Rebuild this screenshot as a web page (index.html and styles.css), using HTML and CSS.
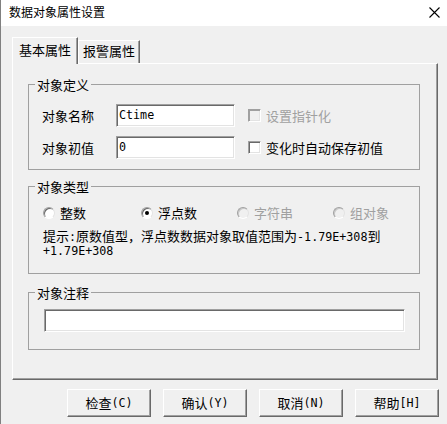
FILE: index.html
```html
<!DOCTYPE html>
<html>
<head>
<meta charset="utf-8">
<link rel="stylesheet" href="styles.css">
</head>
<body>
<div class="window">
  <div class="titlebar">
    <span class="title">数据对象属性设置</span>
    <svg class="close" width="11" height="11" viewBox="0 0 11 11"><path d="M0.5 0.5 L10.5 10.5 M10.5 0.5 L0.5 10.5" stroke="#000" stroke-width="1.1" fill="none"/></svg>
  </div>
  <div class="content">
    <div class="tabs">
      <div class="tab active">基本属性</div>
      <div class="tab other">报警属性</div>
    </div>
    <div class="panel">
      <fieldset class="group">
        <legend>对象定义</legend>
        <div class="inner g1">
          <div class="row">
            <span class="lbl">对象名称</span>
            <div class="input small"><span class="m">Ctime</span></div>
            <span class="check disabled"><span class="box"></span>设置指针化</span>
          </div>
          <div class="row">
            <span class="lbl">对象初值</span>
            <div class="input small"><span class="m">0</span></div>
            <span class="check"><span class="box"></span>变化时自动保存初值</span>
          </div>
        </div>
      </fieldset>
      <fieldset class="group">
        <legend>对象类型</legend>
        <div class="inner g2">
          <div class="radios">
            <span class="radio"><span class="rd"></span>整数</span>
            <span class="radio"><span class="rd"><span class="dot"></span></span>浮点数</span>
            <span class="radio disabled"><span class="rd"></span>字符串</span>
            <span class="radio disabled"><span class="rd"></span>组对象</span>
          </div>
          <div class="hint">提示<span class="m">:</span>原数值型，浮点数数据对象取值范围为<span class="m">-1.79E+308</span>到<br><span class="m">+1.79E+308</span></div>
        </div>
      </fieldset>
      <fieldset class="group">
        <legend>对象注释</legend>
        <div class="inner g3">
          <div class="input wide"></div>
        </div>
      </fieldset>
    </div>
    <div class="buttons">
      <div class="btn">检查<span class="m">(C)</span></div>
      <div class="btn">确认<span class="m">(Y)</span></div>
      <div class="btn">取消<span class="m">(N)</span></div>
      <div class="btn">帮助<span class="m">[H]</span></div>
    </div>
  </div>
</div>
</body>
</html>
```
FILE: styles.css
```css
body {
  margin: 0;
  background: #f0f0f0;
  font-family: "Noto Sans CJK SC", sans-serif;
  font-size: 13px;
  color: #000;
}
.m {
  font-family: "DejaVu Sans Mono", monospace;
  font-size: 11.7px;
}
.window {
  width: 447px;
  height: 424px;
  box-sizing: border-box;
  border-left: 1px solid #808080;
  display: flex;
  flex-direction: column;
}
.titlebar {
  height: 26px;
  flex: none;
  background: #fff;
  display: flex;
  align-items: center;
  justify-content: space-between;
  padding: 0 7px 2px 8px;
  box-sizing: border-box;
}
.title {
  font-size: 12px;
  line-height: 16px;
}
.close { display: block; }
.content {
  padding: 11px 0 0 11px;
}
.tabs {
  display: flex;
  align-items: flex-end;
  height: 27px;
  margin-bottom: -1px;
  position: relative;
  z-index: 1;
}
.tab {
  box-sizing: border-box;
  background: #f0f0f0;
  border-top: 1px solid #fff;
  border-left: 1px solid #fff;
  border-right: 1px solid #696969;
  box-shadow: inset -1px 0 0 #a0a0a0;
  text-align: center;
  line-height: 18px;
}
.tab.active {
  width: 66px;
  height: 27px;
  padding-top: 3px;
}
.tab.other {
  width: 62px;
  height: 23px;
  margin-bottom: 1px;
  padding-top: 1px;
}
.panel {
  width: 426px;
  height: 317px;
  box-sizing: border-box;
  border-top: 1px solid #fff;
  border-left: 1px solid #fff;
  border-right: 1px solid #696969;
  border-bottom: 1px solid #696969;
  box-shadow: inset -1px -1px 0 #a0a0a0;
  padding-top: 13px;
}
.group {
  margin: 0 17px 0 15px;
  padding: 0;
  border: 1px solid #a0a0a0;
  min-width: 0;
}
.group + .group { margin-top: 9px; }
.group:last-child { margin-top: 11px; }
legend {
  margin-left: 6px;
  padding: 0 2px;
  line-height: 15px;
  font-size: 13px;
}
.g1 { padding: 12px 0 10px 13px; display: flex; flex-direction: column; gap: 9px; }
.g2 { padding: 12px 0 16px 14px; }
.g3 { padding: 9px 0 17px 15px; }
.row {
  display: flex;
  align-items: center;
  height: 23px;
}
.lbl { width: 74px; line-height: 16px; }
.input {
  height: 23px;
  box-sizing: border-box;
  background: #fff;
  border-top: 1px solid #a0a0a0;
  border-left: 1px solid #a0a0a0;
  border-right: 1px solid #fff;
  border-bottom: 1px solid #fff;
  box-shadow: inset 1px 1px 0 #696969, inset -1px -1px 0 #e3e3e3;
  display: flex;
  align-items: center;
  padding: 0 0 2px 2px;
  line-height: 14px;
}
.input.small { width: 119px; }
.input.wide { width: 361px; }
.check {
  display: flex;
  align-items: center;
  gap: 5px;
  margin-left: 13px;
  line-height: 16px;
}
.box {
  width: 13px;
  height: 13px;
  box-sizing: border-box;
  background: #fff;
  border-top: 1px solid #a0a0a0;
  border-left: 1px solid #a0a0a0;
  border-right: 1px solid #fff;
  border-bottom: 1px solid #fff;
  box-shadow: inset 1px 1px 0 #696969, inset -1px -1px 0 #e3e3e3;
}
.disabled { color: #a0a0a0; }
.check.disabled .box {
  background: #f0f0f0;
  box-shadow: inset 1px 1px 0 #a0a0a0, inset -1px -1px 0 #e3e3e3;
}
.radios {
  display: grid;
  grid-template-columns: 98px 96px 96px auto;
  height: 14px;
  align-items: center;
}
.radio {
  display: flex;
  align-items: center;
  gap: 5px;
  line-height: 14px;
}
.rd {
  width: 12px;
  height: 12px;
  box-sizing: border-box;
  border-radius: 50%;
  background: #fff;
  border: 1px solid;
  border-color: #a0a0a0 #e3e3e3 #fff #a0a0a0;
  box-shadow: inset 1px 1px 0 #696969;
  display: flex;
  align-items: center;
  justify-content: center;
}
.radio.disabled .rd {
  background: #f0f0f0;
  box-shadow: inset 1px 1px 0 #c8c8c8;
}
.dot {
  width: 4px;
  height: 4px;
  border-radius: 50%;
  background: #000;
}
.hint {
  margin-top: 10px;
  line-height: 12.5px;
  white-space: nowrap;
}
.buttons {
  display: flex;
  gap: 12px;
  margin: 9px 0 0 55px;
}
.btn {
  width: 84px;
  height: 28px;
  box-sizing: border-box;
  border-top: 1px solid #fff;
  border-left: 1px solid #fff;
  border-right: 1px solid #696969;
  border-bottom: 1px solid #696969;
  box-shadow: inset -1px -1px 0 #a0a0a0;
  display: flex;
  align-items: center;
  justify-content: center;
  line-height: 16px;
}
```
